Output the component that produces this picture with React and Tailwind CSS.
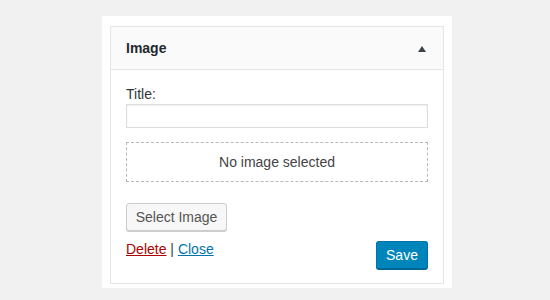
export default function App() {
  return (
    <div
      className="w-[550px] h-[300px] bg-[#f1f1f1] pt-[16px] pl-[102px] overflow-hidden"
      style={{ fontFamily: '"Liberation Sans", Arial, sans-serif' }}
    >
      {/* Panel blanco exterior */}
      <div className="w-[350px] bg-white pt-[10px] px-[8px] pb-[4px]">
        <div className="w-[334px] border border-[#e5e5e5] bg-white">
          {/* Cabecera del widget */}
          <div className="h-[43px] bg-[#fafafa] border-b border-[#e5e5e5] pl-[15px] pr-[17px] flex items-center justify-between">
            <h3 className="text-[14px] font-bold text-[#23282d]">Image</h3>
            <svg width="8" height="6" viewBox="0 0 8 6" className="mt-[1px]">
              <polygon points="4,0 8,6 0,6" fill="#3c434a" />
            </svg>
          </div>

          {/* Contenido */}
          <div className="px-[15px] pt-[14px] pb-[14px] text-[14px] text-[#444]">
            <label className="block leading-[20px] text-[#32373c]">Title:</label>
            <input
              type="text"
              className="block w-full h-[24px] border border-[#ddd] bg-white shadow-[inset_0_1px_2px_rgba(0,0,0,0.07)] outline-none"
            />

            <div className="mt-[14px] h-[40px] border border-dashed border-[#b4b9be] flex items-center justify-center text-[#444]">
              No image selected
            </div>

            <button className="mt-[21px] h-[28px] w-[101px] rounded-[3px] border border-[#ccc] bg-[#f7f7f7] text-[#555] text-[14px] shadow-[0_1px_0_#ccc] leading-[26px] whitespace-nowrap">
              Select Image
            </button>

            <div className="mt-[8px] flex items-start justify-between">
              <div className="leading-[20px]">
                <a href="#" className="text-[#a00] underline">Delete</a>
                <span className="text-[#444]"> | </span>
                <a href="#" className="text-[#0073aa] underline">Close</a>
              </div>
              <button className="mt-[2px] h-[28px] w-[52px] rounded-[3px] bg-[#0085ba] border border-[#0073aa] border-b-[#006799] shadow-[0_1px_0_#006799] text-white text-[14px] leading-[26px]">
                Save
              </button>
            </div>
          </div>
        </div>
      </div>
    </div>
  )
}
